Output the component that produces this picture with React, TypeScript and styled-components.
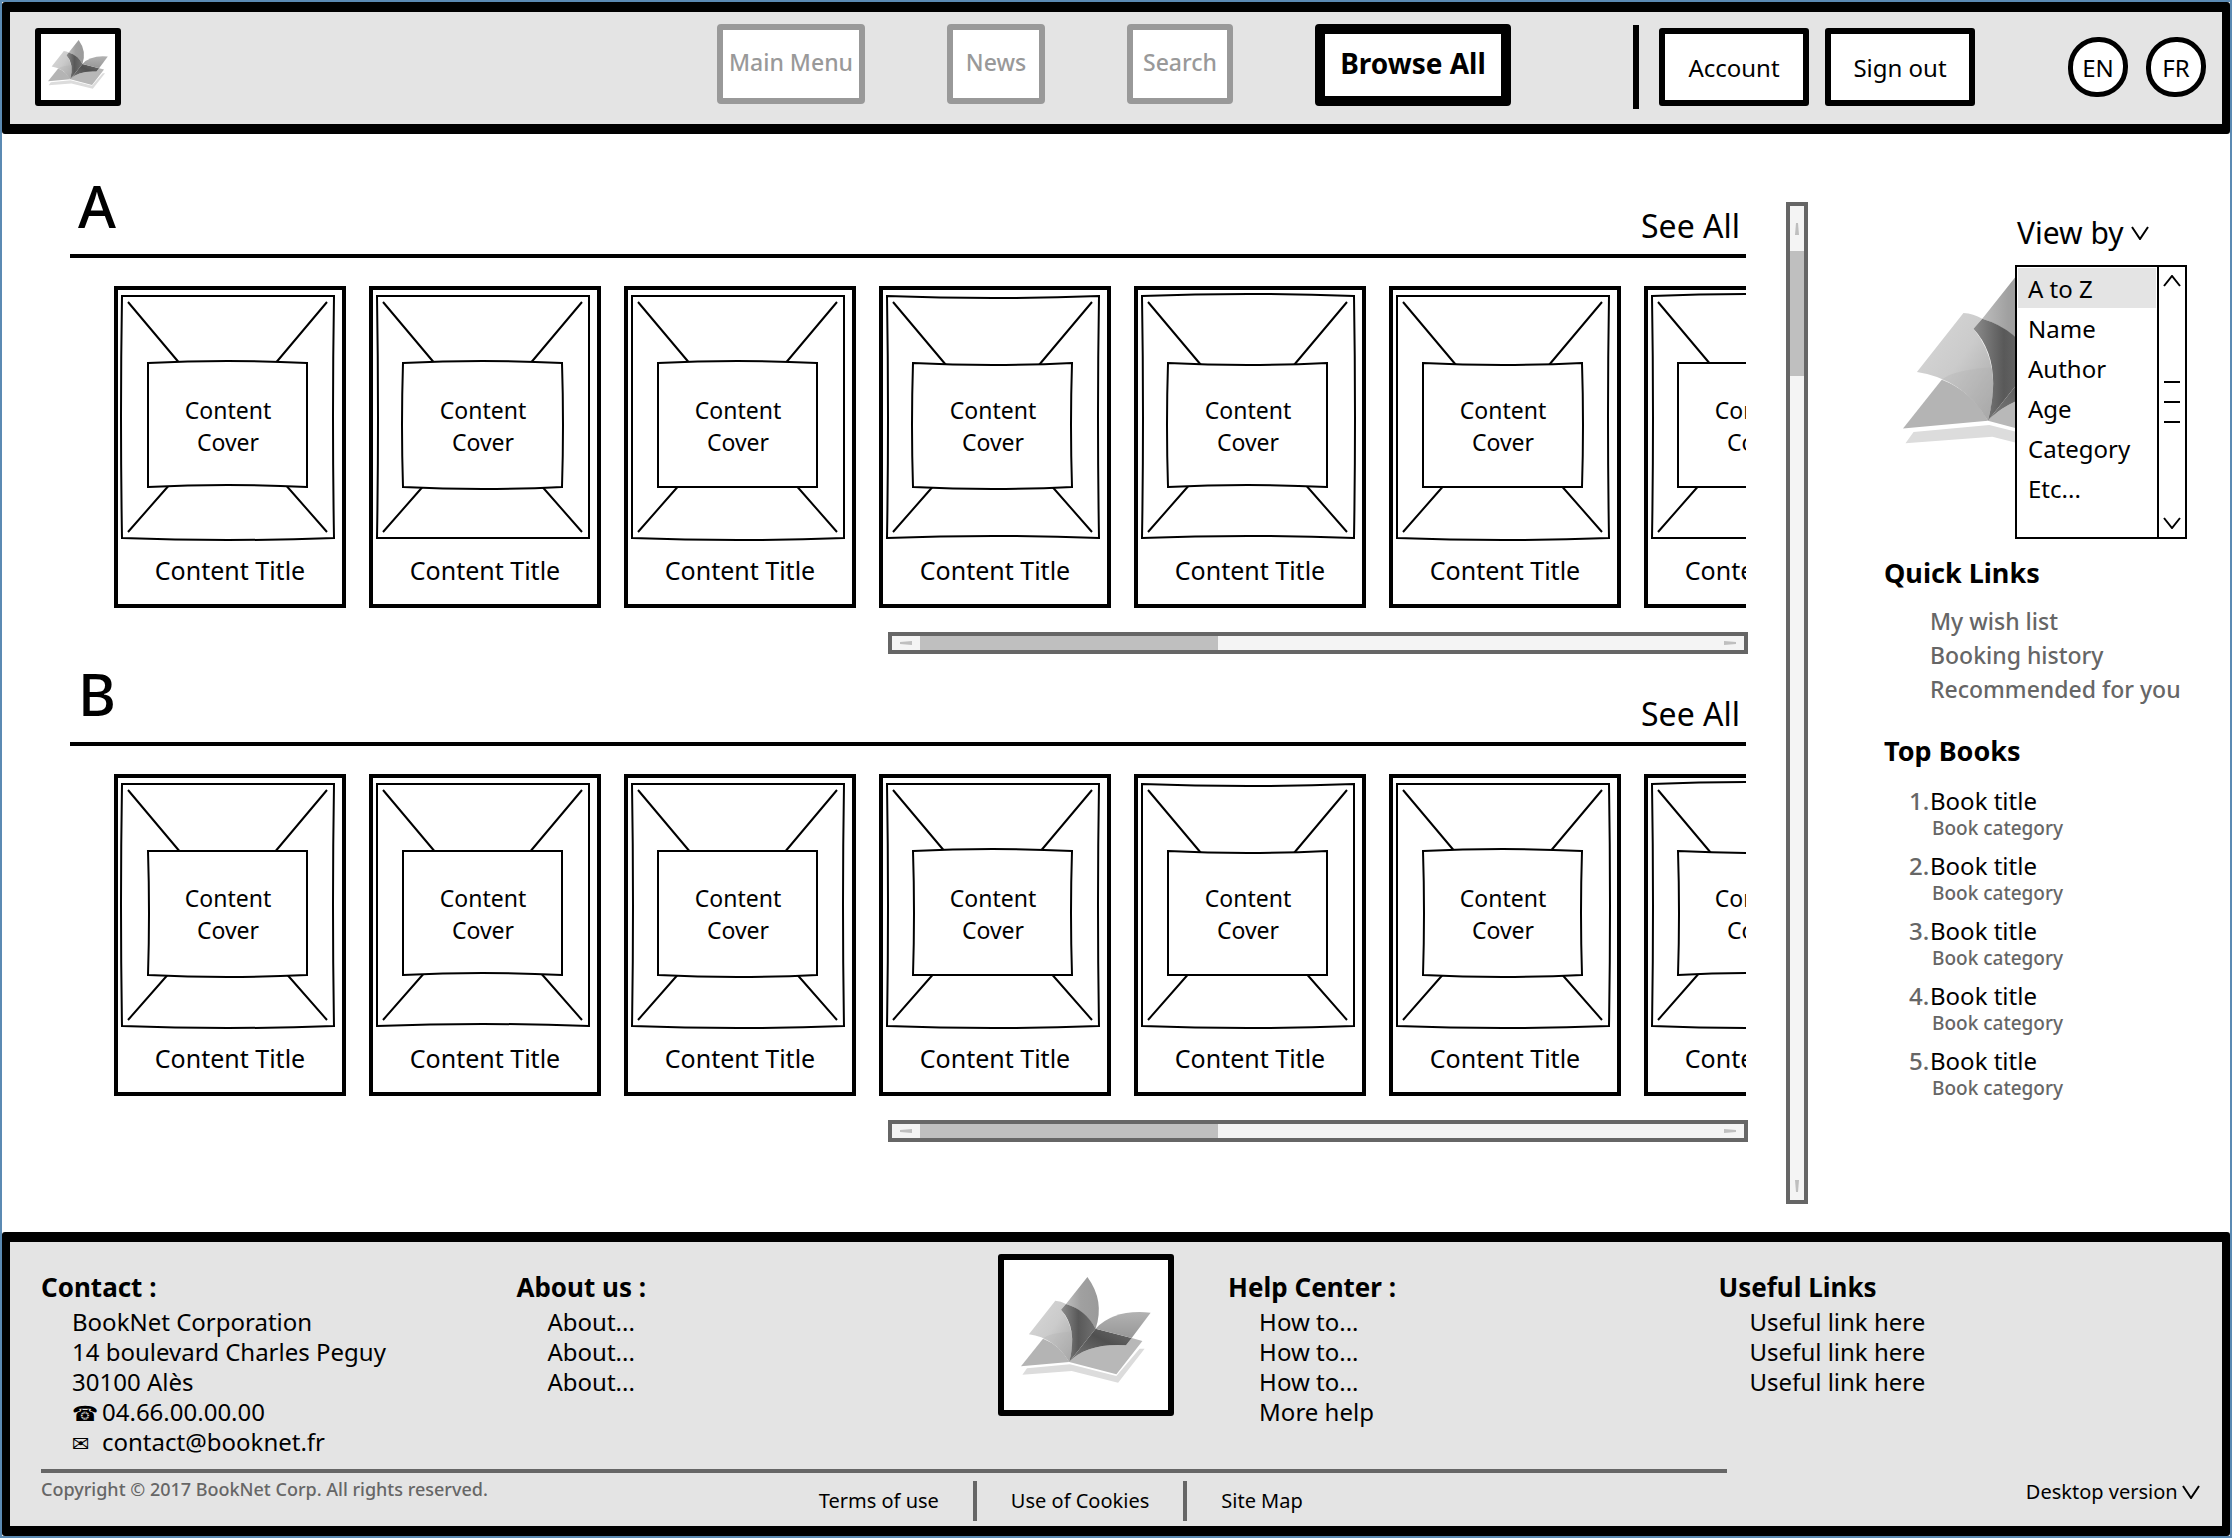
import React, { useState } from "react";
import styled, { createGlobalStyle } from "styled-components";

const ink = "#000";
const panel = "#e4e4e4";
const muted = "#666";
const faded = "#999";

const GlobalStyle = createGlobalStyle`
  *, *::before, *::after { box-sizing: border-box; }
  body {
    margin: 0;
    background: #fff;
    color: ${ink};
    font-family: "Noto Sans", "Open Sans", sans-serif;
  }
  ul, ol, h2, h3, p, address { margin: 0; padding: 0; font-style: normal; }
  ul, ol { list-style: none; }
  a { color: inherit; text-decoration: none; }
  button, select { font-family: inherit; color: inherit; margin: 0; }
  svg { display: block; }
`;

const Page = styled.div`
  min-height: 100vh;
  display: flex;
  flex-direction: column;
  border: 2px solid #5b8ab3;
`;

/* ---------- header ---------- */

const Header = styled.header`
  display: flex;
  align-items: center;
  height: 132px;
  padding: 0 16px 2px 25px;
  background: ${panel};
  border: solid ${ink};
  border-width: 10px 8px;
  border-radius: 3px;
`;

const LogoFrame = styled.a<{ $large?: boolean }>`
  display: flex;
  flex: none;
  align-items: flex-start;
  justify-content: center;
  width: ${(p) => (p.$large ? 176 : 86)}px;
  height: ${(p) => (p.$large ? 162 : 78)}px;
  padding-top: ${(p) => (p.$large ? 17 : 6)}px;
  background: #fff;
  border: 6px solid ${ink};
  border-radius: 3px;
`;

const MainNav = styled.nav`
  display: flex;
  align-items: flex-start;
  gap: 82px;
  margin: 0 122px 0 auto;
  padding-bottom: 4px;
`;

const NavButton = styled.button<{ $w: number; $active?: boolean }>`
  width: ${(p) => p.$w}px;
  height: ${(p) => (p.$active ? 82 : 80)}px;
  padding: 0 0 4px;
  background: #fff;
  border: ${(p) => (p.$active ? `10px solid ${ink}` : `6px solid ${faded}`)};
  border-radius: 4px;
  color: ${(p) => (p.$active ? ink : faded)};
  font-size: ${(p) => (p.$active ? 28 : 23)}px;
  font-weight: ${(p) => (p.$active ? 700 : 500)};
  white-space: nowrap;
`;

const Tools = styled.div`
  display: flex;
  align-items: center;
`;

const Bar = styled.span<{ $tone: string; $w: number; $h: number }>`
  flex: none;
  width: ${(p) => p.$w}px;
  height: ${(p) => p.$h}px;
  background: ${(p) => p.$tone};
`;

const AccountActions = styled.div`
  display: flex;
  gap: 16px;
  margin: 0 93px 0 20px;
`;

const AccountButton = styled.button`
  width: 150px;
  height: 78px;
  padding: 0;
  background: #fff;
  border: 6px solid ${ink};
  border-radius: 3px;
  font-size: 24px;
`;

const Languages = styled.div`
  display: flex;
  gap: 18px;
`;

const LanguageButton = styled.button`
  width: 60px;
  height: 60px;
  padding: 0;
  background: #fff;
  border: 5px solid ${ink};
  border-radius: 50% 48% 50% 47%;
  font-size: 24px;
`;

/* ---------- catalogue ---------- */

const Main = styled.main`
  display: flex;
  flex: 1;
`;

const Catalog = styled.div`
  flex: 1;
  min-width: 0;
  display: flex;
  flex-direction: column;
  gap: 2px;
  padding: 34px 0 0 68px;
`;

const Shelf = styled.section`
  display: flex;
  flex-direction: column;
`;

const ShelfHead = styled.div`
  display: flex;
  align-items: flex-end;
  justify-content: space-between;
  padding: 0 6px 10px 8px;
  border-bottom: 4px solid ${ink};
`;

const ShelfLetter = styled.h2`
  font-size: 58px;
  line-height: 76px;
  font-weight: 500;
`;

const SeeAll = styled.a`
  font-size: 32px;
  line-height: 36px;
`;

const Cards = styled.ul`
  display: flex;
  gap: 23px;
  margin: 28px 0 24px;
  padding-left: 44px;
  overflow: hidden;
`;

const Card = styled.li`
  flex: none;
  width: 232px;
  height: 322px;
  padding: 5px 3px 0;
  border: 4px solid ${ink};
`;

const Cover = styled.div`
  display: grid;
  width: 214px;
  height: 244px;
  > * { grid-area: 1 / 1; }
`;

const CoverLabel = styled.span`
  place-self: center;
  padding-top: 18px;
  font-size: 23px;
  line-height: 32px;
  text-align: center;
`;

const CardTitle = styled.h3`
  margin-top: 15px;
  font-size: 25px;
  line-height: 32px;
  font-weight: 400;
  text-align: center;
`;

/* ---------- scrollbars ---------- */

const Track = styled.div<{ $vertical?: boolean }>`
  display: flex;
  flex: none;
  flex-direction: ${(p) => (p.$vertical ? "column" : "row")};
  align-items: stretch;
  background: #f4f4f4;
  border: 4px solid ${muted};
  ${(p) =>
    p.$vertical
      ? "width: 22px; margin: 68px 76px 28px 40px;"
      : "width: 860px; height: 22px; margin: 0 -2px 0 auto;"}
`;

const Arrow = styled.button<{ $size: number }>`
  flex: 0 0 ${(p) => p.$size}px;
  display: flex;
  align-items: center;
  justify-content: center;
  padding: 0;
  background: none;
  border: 0;
`;

const Thumb = styled.div<{ $size: number }>`
  flex: 0 0 ${(p) => p.$size}px;
  background: #bfbfbf;
`;

const Rest = styled.div`
  flex: 1;
`;

/* ---------- sidebar ---------- */

const Sidebar = styled.aside`
  flex: 0 0 346px;
  padding: 79px 0 0;
`;

const ViewBy = styled.label`
  display: flex;
  align-items: center;
  gap: 7px;
  padding-left: 133px;
  font-size: 30px;
  line-height: 40px;
`;

const Stage = styled.div`
  display: grid;
  justify-items: start;
  height: 274px;
  margin-top: 12px;
  > * { grid-area: 1 / 1; }
`;

const StageLogo = styled.div`
  padding: 6px 0 0 19px;
`;

const ListBox = styled.div`
  position: relative;
  display: flex;
  width: 172px;
  height: 274px;
  margin-left: 131px;
  background: #fff;
  border: 2px solid ${ink};
`;

const SortSelect = styled.select`
  flex: 1;
  min-width: 0;
  height: 270px;
  padding: 1px 1px 0;
  overflow: hidden;
  background: #fff;
  border: 0;
  outline: 0;
  font-size: 24px;
  scrollbar-width: none;
  option {
    height: 40px;
    padding: 4px 0 0 10px;
    color: ${ink};
  }
  option:checked {
    color: ${ink};
    background: ${panel} linear-gradient(${panel}, ${panel});
  }
`;

const ListRail = styled.div`
  display: flex;
  flex-direction: column;
  align-items: center;
  justify-content: space-between;
  width: 28px;
  padding: 8px 0;
  border-left: 2px solid ${ink};
`;

const SideHeading = styled.h2<{ $top: number }>`
  margin-top: ${(p) => p.$top}px;
  font-size: 27px;
  line-height: 36px;
  font-weight: 700;
`;

const QuickLinks = styled.ul`
  margin-top: 13px;
  padding-left: 46px;
  color: ${muted};
  font-size: 23px;
  line-height: 34px;
  font-weight: 500;
`;

const TopBooks = styled.ol`
  display: flex;
  flex-direction: column;
  gap: 10px;
  margin-top: 17px;
  padding-left: 25px;
`;

const Book = styled.li`
  display: grid;
  grid-template-columns: 21px 1fr;
`;

const BookRank = styled.span`
  color: ${muted};
  font-size: 24px;
  line-height: 30px;
  font-weight: 500;
  white-space: nowrap;
`;

const BookTitle = styled.a`
  font-size: 24px;
  line-height: 30px;
`;

const BookCategory = styled.span`
  grid-column: 2;
  padding-left: 2px;
  color: ${muted};
  font-size: 19px;
  line-height: 25px;
  font-weight: 500;
`;

/* ---------- footer ---------- */

const Footer = styled.footer`
  height: 304px;
  padding: 12px 20px 0 31px;
  background: ${panel};
  border: solid ${ink};
  border-width: 10px 8px;
  border-radius: 3px;
`;

const FooterColumns = styled.div`
  display: grid;
  grid-template-columns: 475fr 481fr 230fr 490fr 483fr;
  height: 204px;
`;

const FooterColumn = styled.section`
  padding-top: 15px;
`;

const FooterHeading = styled.h2`
  margin-bottom: 2px;
  font-size: 26px;
  line-height: 36px;
  font-weight: 700;
`;

const FooterList = styled.ul`
  padding-left: 31px;
  font-size: 24px;
  line-height: 30px;
`;

const ContactGlyph = styled.span`
  display: inline-block;
  width: 30px;
  font-family: "DejaVu Sans", sans-serif;
  font-size: 21px;
  line-height: 20px;
`;

const Rule = styled.hr`
  width: 78%;
  height: 4px;
  margin: 11px 0 0;
  background: ${muted};
  border: 0;
`;

const FooterBottom = styled.div`
  display: grid;
  grid-template-columns: 777fr 1206fr 176fr;
  align-items: start;
`;

const Copyright = styled.p`
  padding-top: 4px;
  color: ${muted};
  font-size: 18px;
  line-height: 24px;
  font-weight: 500;
`;

const LegalLinks = styled.nav`
  display: flex;
  align-items: center;
  gap: 34px;
  padding-top: 8px;
  font-size: 20px;
  line-height: 40px;
  white-space: nowrap;
`;

const VersionPicker = styled.div`
  display: flex;
  align-items: center;
  padding-top: 7px;
`;

const VersionSelect = styled.select`
  flex: none;
  width: 156px;
  height: 24px;
  padding: 0;
  appearance: none;
  background: none;
  border: 0;
  font-size: 20px;
  line-height: 24px;
`;

/* ---------- drawings ---------- */

function BookLogo({ id, width, height }: { id: string; width: number; height: number }) {
  const fill = (name: string) => `url(#${id}-${name})`;
  return (
    <svg width={width} height={height} viewBox="0 0 130 106" aria-hidden="true">
      <defs>
        <linearGradient id={`${id}-leaf`} x1="0" y1="0" x2="1" y2="1">
          <stop offset="0" stopColor="#d9d9d9" />
          <stop offset="0.5" stopColor="#cbcbcb" />
          <stop offset="1" stopColor="#a4a4a4" />
        </linearGradient>
        <linearGradient id={`${id}-top`} x1="0" y1="0" x2="1" y2="0">
          <stop offset="0" stopColor="#bcbcbc" />
          <stop offset="0.45" stopColor="#a0a0a0" />
          <stop offset="1" stopColor="#9a9a9a" />
        </linearGradient>
        <linearGradient id={`${id}-core`} x1="0" y1="0" x2="1" y2="0">
          <stop offset="0" stopColor="#8c8c8c" />
          <stop offset="0.5" stopColor="#595959" />
          <stop offset="1" stopColor="#707070" />
        </linearGradient>
        <linearGradient id={`${id}-fold`} x1="0" y1="1" x2="1" y2="0">
          <stop offset="0" stopColor="#7c7c7c" />
          <stop offset="0.6" stopColor="#505050" />
          <stop offset="1" stopColor="#6c6c6c" />
        </linearGradient>
        <linearGradient id={`${id}-right`} x1="0" y1="0" x2="0" y2="1">
          <stop offset="0" stopColor="#b2b2b2" />
          <stop offset="1" stopColor="#979797" />
        </linearGradient>
      </defs>
      <path d="M1.4 97.7 6 91.3 49 87.3 95.4 99 118.6 71.7H123.6L97.1 105.7 50.7 94Z" fill="#dcdcdc" />
      <path d="M0 89.3 22 61.7Q39 68 48.2 85Z" fill="#b4b4b4" />
      <path d="M48.2 85Q66 66 105 68.3L110.7 61 121.4 64 95.4 97.3Z" fill="#b8b8b8" />
      <path d="M34.3 23.7 7.9 57.3Q34 61 48.2 85 57 53 40 32.7L45 27Q40 24 34.3 23.7Z" fill={fill("leaf")} />
      <path d="M22 61.7Q28 56 51.4 54.5 51.5 70 48.2 85 38 67 22 61.7Z" fill="#b0b0b0" opacity="0.3" />
      <path d="M66.4 0Q84 24 74.6 51.7 64 33 45 27Z" fill={fill("top")} />
      <path d="M45 27Q65 33 74.6 51.7L48.2 85Q57 51 40 32.7Z" fill={fill("core")} />
      <path d="M48.2 85 74.6 51.7 110.7 61 105 68.3Q66 66 48.2 85Z" fill={fill("fold")} />
      <path d="M74.6 51.7Q93 32 129.6 35.7L110.7 61Z" fill={fill("right")} />
    </svg>
  );
}

type Bow = [number, number, number, number];

/* A rectangle whose sides bend by the given top, right, bottom and left amounts. */
function bentRect(x1: number, y1: number, x2: number, y2: number, [t, r, b, l]: Bow) {
  const cx = (x1 + x2) / 2;
  const cy = (y1 + y2) / 2;
  return `M${x1} ${y1}Q${cx} ${y1 + 2 * t} ${x2} ${y1}Q${x2 + 2 * r} ${cy} ${x2} ${y2}Q${cx} ${y2 + 2 * b} ${x1} ${y2}Q${x1 + 2 * l} ${cy} ${x1} ${y1}Z`;
}

function CoverSketch({ outer, inner }: { outer: Bow; inner: Bow }) {
  return (
    <svg width="214" height="244" viewBox="0 0 214 244" fill="#fff" stroke={ink} strokeWidth="2" overflow="visible" aria-hidden="true">
      <path d={bentRect(1, 1, 213, 243, outer)} />
      <path d="M7 7 60 70M206 7 153 70M7 237 50 188M206 237 163 188" />
      <path d={bentRect(27, 68, 186, 192, inner)} />
    </svg>
  );
}

function Chevron({ w, h, up }: { w: number; h: number; up?: boolean }) {
  const d = up ? `M1 ${h - 1}L${w / 2} 1L${w - 1} ${h - 1}` : `M1 1L${w / 2} ${h - 1}L${w - 1} 1`;
  return (
    <svg width={w} height={h} viewBox={`0 0 ${w} ${h}`} fill="none" stroke={ink} strokeWidth="2" aria-hidden="true">
      <path d={d} />
    </svg>
  );
}

const arrowShapes = {
  left: [12, 4, "M0 1 12 0V4L0 3Z"],
  right: [12, 4, "M12 1 0 0V4L12 3Z"],
  up: [4, 12, "M1 0 0 12H4L3 0Z"],
  down: [4, 12, "M1 12 0 0H4L3 12Z"],
} as const;

function ScrollArrow({ dir, size }: { dir: keyof typeof arrowShapes; size: number }) {
  const [w, h, d] = arrowShapes[dir];
  return (
    <Arrow type="button" $size={size} aria-label={`Scroll ${dir}`}>
      <svg width={w} height={h} viewBox={`0 0 ${w} ${h}`} fill="#bfbfbf">
        <path d={d} />
      </svg>
    </Arrow>
  );
}

/* ---------- data ---------- */

const shelves: { letter: string; covers: { outer: Bow; inner: Bow }[] }[] = [
  {
    letter: "A",
    covers: [
      { outer: [0, -1, 2, -1], inner: [-2, 0, -2, 0] },
      { outer: [0, 0, 0, 1], inner: [-2, 1, 2, -1] },
      { outer: [0, 0, 2, 0], inner: [-2, 0, 0, 0] },
      { outer: [2, -1, -2, 1], inner: [2, -1, 2, -1] },
      { outer: [-2, 1, -2, 1], inner: [2, 0, -2, -1] },
      { outer: [0, -1, 2, 0], inner: [2, 1, 0, 0] },
      { outer: [-2, 0, 0, 1], inner: [0, 0, 0, 0] },
    ],
  },
  {
    letter: "B",
    covers: [
      { outer: [0, -1, 2, -1], inner: [0, 0, 2, 1] },
      { outer: [0, 0, -2, 0], inner: [0, 0, -2, 0] },
      { outer: [0, -1, 2, 1], inner: [0, 0, 2, 0] },
      { outer: [0, -1, 2, 1], inner: [-2, -1, 0, 1] },
      { outer: [2, 0, 2, 0], inner: [2, 0, 0, 0] },
      { outer: [0, 1, 2, 0], inner: [-2, -1, 2, 1] },
      { outer: [-2, 0, 2, 1], inner: [2, 0, -2, 1] },
    ],
  },
];

const sortOptions = ["A to Z", "Name", "Author", "Age", "Category", "Etc..."];
const quickLinks = ["My wish list", "Booking history", "Recommended for you"];
const ranks = [1, 2, 3, 4, 5];

function LinkColumn({ title, links }: { title: string; links: string[] }) {
  return (
    <FooterColumn>
      <FooterHeading>{title}</FooterHeading>
      <FooterList>
        {links.map((text, i) => (
          <li key={i}>
            <a href="#">{text}</a>
          </li>
        ))}
      </FooterList>
    </FooterColumn>
  );
}

export default function App() {
  const [sort, setSort] = useState("A to Z");

  return (
    <>
      <GlobalStyle />
      <Page>
        <Header>
          <LogoFrame href="#" aria-label="BookNet home">
            <BookLogo id="head" width={60} height={49} />
          </LogoFrame>
          <MainNav>
            <NavButton $w={148}>Main Menu</NavButton>
            <NavButton $w={98}>News</NavButton>
            <NavButton $w={106}>Search</NavButton>
            <NavButton $w={196} $active>
              Browse All
            </NavButton>
          </MainNav>
          <Tools>
            <Bar $tone={ink} $w={6} $h={84} />
            <AccountActions>
              <AccountButton>Account</AccountButton>
              <AccountButton>Sign out</AccountButton>
            </AccountActions>
            <Languages>
              <LanguageButton>EN</LanguageButton>
              <LanguageButton>FR</LanguageButton>
            </Languages>
          </Tools>
        </Header>

        <Main>
          <Catalog>
            {shelves.map((shelf) => (
              <Shelf key={shelf.letter}>
                <ShelfHead>
                  <ShelfLetter>{shelf.letter}</ShelfLetter>
                  <SeeAll href="#">See All</SeeAll>
                </ShelfHead>
                <Cards>
                  {shelf.covers.map((cover, i) => (
                    <Card key={i}>
                      <Cover>
                        <CoverSketch {...cover} />
                        <CoverLabel>
                          Content
                          <br />
                          Cover
                        </CoverLabel>
                      </Cover>
                      <CardTitle>Content Title</CardTitle>
                    </Card>
                  ))}
                </Cards>
                <Track>
                  <ScrollArrow dir="left" size={28} />
                  <Thumb $size={298} />
                  <Rest />
                  <ScrollArrow dir="right" size={28} />
                </Track>
              </Shelf>
            ))}
          </Catalog>

          <Track $vertical>
            <ScrollArrow dir="up" size={45} />
            <Thumb $size={125} />
            <Rest />
            <ScrollArrow dir="down" size={28} />
          </Track>

          <Sidebar>
            <ViewBy htmlFor="sort">
              View by
              <Chevron w={18} h={14} />
            </ViewBy>
            <Stage>
              <StageLogo>
                <BookLogo id="side" width={229} height={187} />
              </StageLogo>
              <ListBox>
                <SortSelect id="sort" size={6} value={sort} onChange={(e) => setSort(e.target.value)}>
                  {sortOptions.map((option) => (
                    <option key={option}>{option}</option>
                  ))}
                </SortSelect>
                <ListRail>
                  <Chevron w={18} h={12} up />
                  <svg width="16" height="42" viewBox="0 0 16 42" stroke={ink} strokeWidth="2" aria-hidden="true">
                    <path d="M0 1H16M0 21H16M0 41H16" />
                  </svg>
                  <Chevron w={18} h={12} />
                </ListRail>
              </ListBox>
            </Stage>

            <SideHeading $top={16}>Quick Links</SideHeading>
            <QuickLinks>
              {quickLinks.map((text) => (
                <li key={text}>
                  <a href="#">{text}</a>
                </li>
              ))}
            </QuickLinks>

            <SideHeading $top={27}>Top Books</SideHeading>
            <TopBooks>
              {ranks.map((rank) => (
                <Book key={rank}>
                  <BookRank>{rank}.</BookRank>
                  <BookTitle href="#">Book title</BookTitle>
                  <BookCategory>Book category</BookCategory>
                </Book>
              ))}
            </TopBooks>
          </Sidebar>
        </Main>

        <Footer>
          <FooterColumns>
            <FooterColumn>
              <FooterHeading>Contact :</FooterHeading>
              <FooterList>
                <li>BookNet Corporation</li>
                <li>14 boulevard Charles Peguy</li>
                <li>30100 Alès</li>
                <li>
                  <ContactGlyph>☎</ContactGlyph>04.66.00.00.00
                </li>
                <li>
                  <ContactGlyph>✉</ContactGlyph>
                  <a href="mailto:contact@booknet.fr">contact@booknet.fr</a>
                </li>
              </FooterList>
            </FooterColumn>
            <LinkColumn title="About us :" links={["About...", "About...", "About..."]} />
            <LogoFrame href="#" aria-label="BookNet home" $large>
              <BookLogo id="foot" width={130} height={106} />
            </LogoFrame>
            <LinkColumn title="Help Center :" links={["How to...", "How to...", "How to...", "More help"]} />
            <LinkColumn title="Useful Links" links={["Useful link here", "Useful link here", "Useful link here"]} />
          </FooterColumns>
          <Rule />
          <FooterBottom>
            <Copyright>Copyright © 2017 BookNet Corp. All rights reserved.</Copyright>
            <LegalLinks>
              <a href="#">Terms of use</a>
              <Bar $tone={muted} $w={4} $h={40} />
              <a href="#">Use of Cookies</a>
              <Bar $tone={muted} $w={4} $h={40} />
              <a href="#">Site Map</a>
            </LegalLinks>
            <VersionPicker>
              <VersionSelect aria-label="Site version">
                <option>Desktop version</option>
              </VersionSelect>
              <Chevron w={18} h={14} />
            </VersionPicker>
          </FooterBottom>
        </Footer>
      </Page>
    </>
  );
}
